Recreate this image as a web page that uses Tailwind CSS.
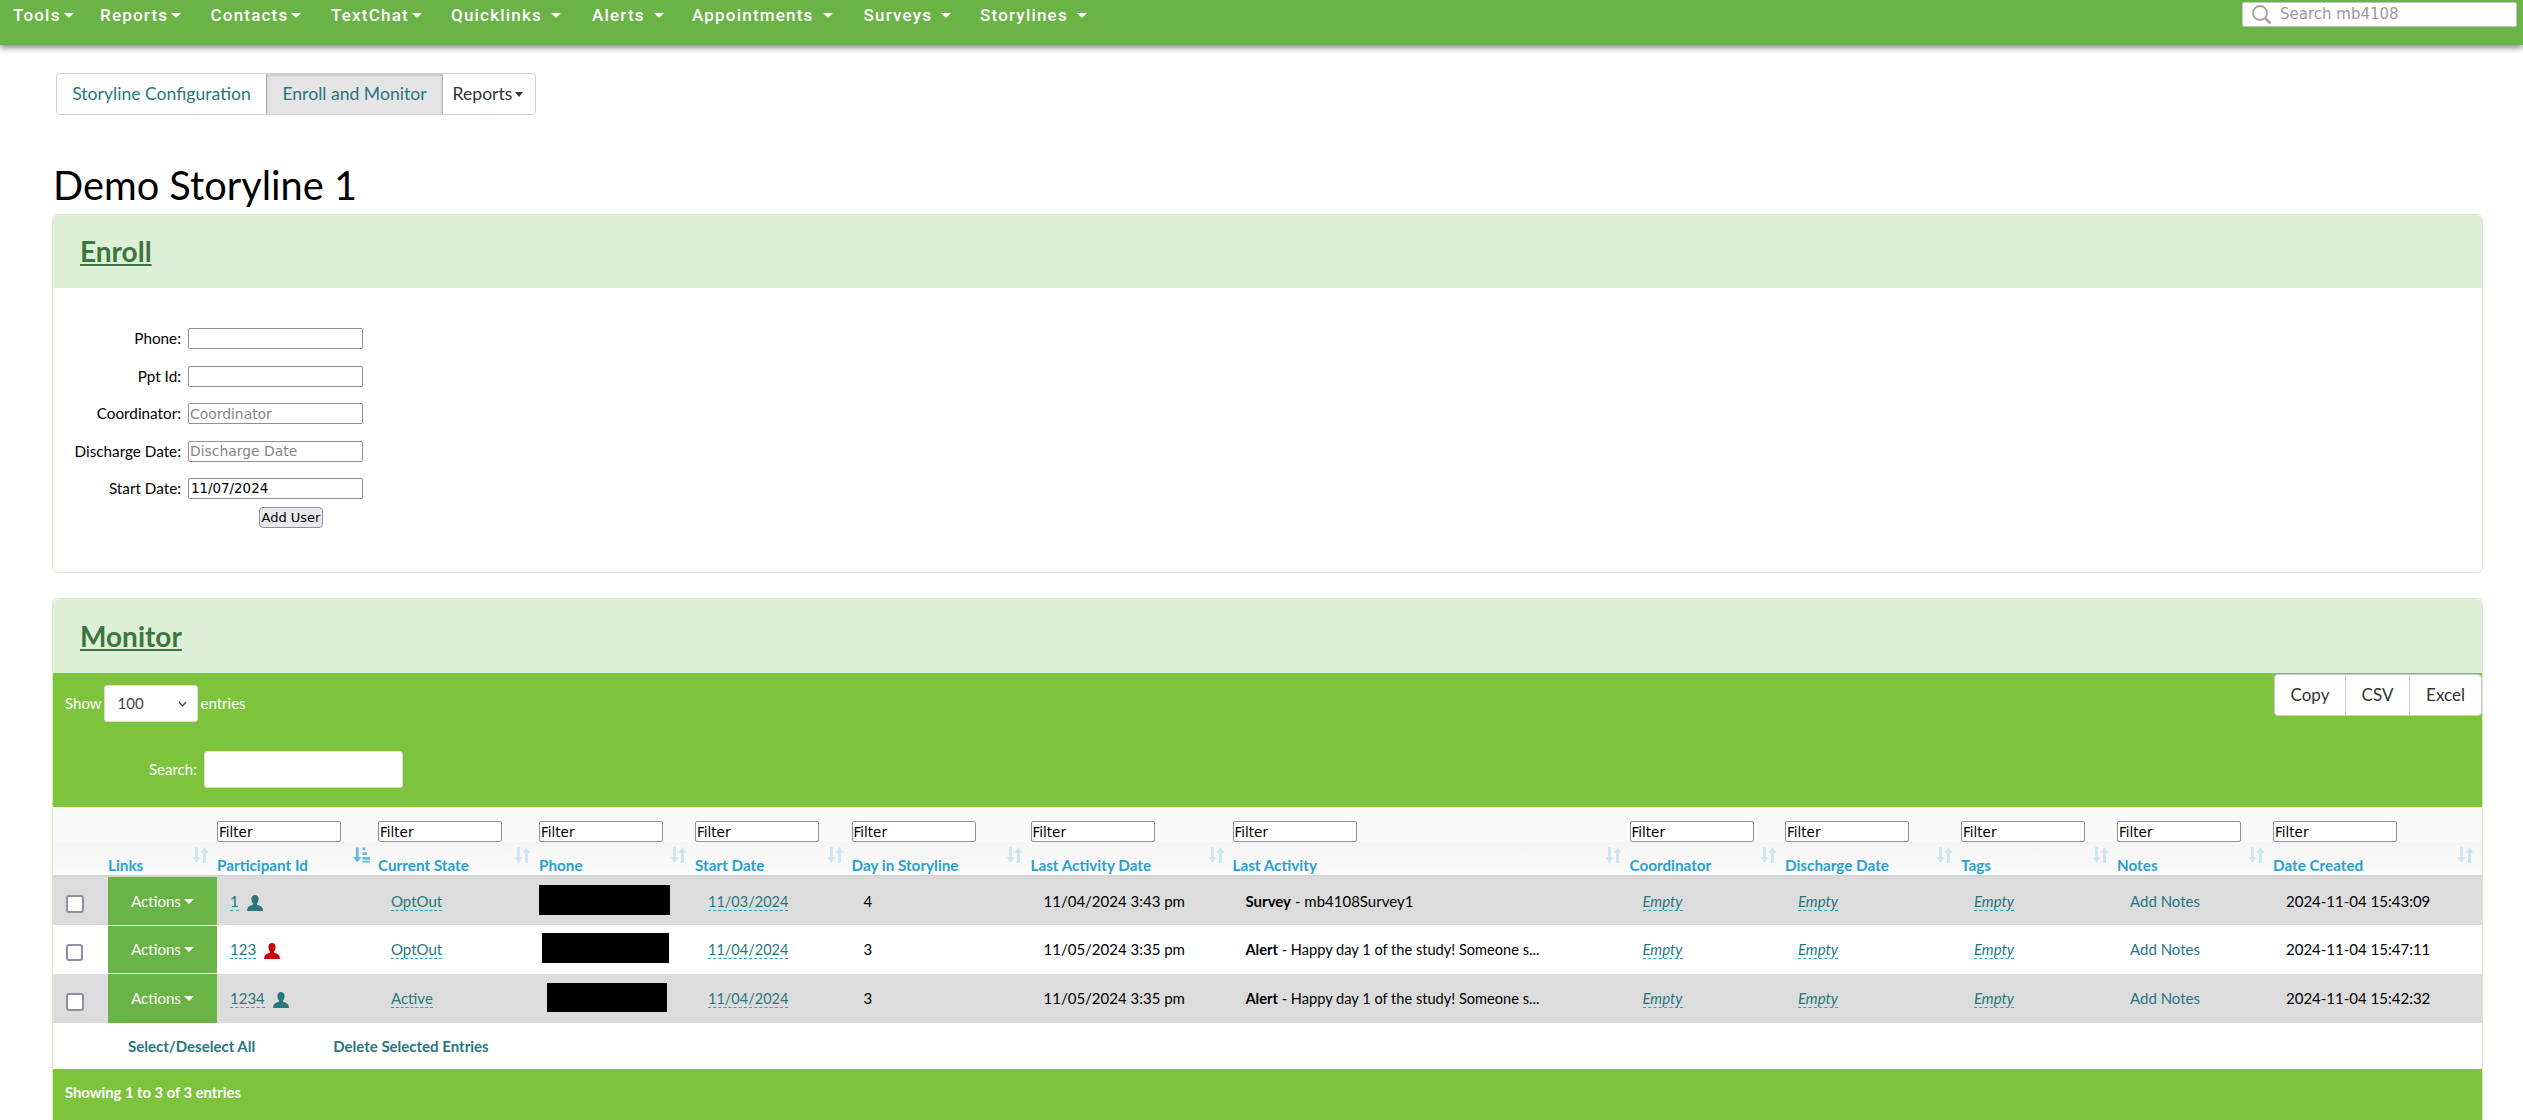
<!DOCTYPE html>
<html lang="en">

<head>
    <meta charset="UTF-8">
    <meta name="viewport" content="width=device-width, initial-scale=1.0">
    <script src="https://cdn.jsdelivr.net/npm/@tailwindcss/browser@4"></script>
    <title>Enroll and Monitor</title>
</head>

<body class="h-screen overflow-hidden bg-white font-['Lato',sans-serif] text-[15px] text-black">
    <svg class="hidden">
        <symbol id="sort" viewBox="0 0 17 16">
            <path d="M3 0h3v10h2.500L4.500 16 .5 10H3zM11 16h3V6h2.500L12.500 0l-4 6H11z" />
        </symbol>
        <symbol id="sort-alt" viewBox="0 0 18 16">
            <path d="M3 0h3v10h3l-4.500 6L0 10h3zM10 0h3v3h-3zM10 5h5v3h-5zM10 10h8v3h-8zM10 14h8v2h-8z" />
        </symbol>
        <symbol id="user" viewBox="0 0 16 16">
            <path d="M8 0c2.300 0 3.600 1.700 3.600 4 0 1.800-.7 3.500-1.600 4.500v1.300c2 .8 5 1.500 5.500 3.500l.5 2.700H0l.5-2.700c.5-2 3.500-2.700 5.500-3.500V8.500C5.100 7.500 4.400 5.800 4.400 4 4.400 1.700 5.700 0 8 0z" />
        </symbol>
    </svg>

    <nav class="flex h-[45px] items-start justify-between bg-[#6ab347] shadow-[0_3px_6px_rgba(0,0,0,0.45)]">
        <ul class="flex pl-[13px] pt-[3px] font-['Roboto',sans-serif] text-[17px] font-medium leading-[24px] tracking-[1.200px] text-white">
            <li class="flex w-[87px] items-center">Tools<span class="ml-[3px] h-0 w-0 border-x-[5px] border-t-[5px] border-x-transparent border-t-white"></span></li>
            <li class="flex w-[110.500px] items-center">Reports<span class="ml-[3px] h-0 w-0 border-x-[5px] border-t-[5px] border-x-transparent border-t-white"></span></li>
            <li class="flex w-[120.500px] items-center">Contacts<span class="ml-[3px] h-0 w-0 border-x-[5px] border-t-[5px] border-x-transparent border-t-white"></span></li>
            <li class="flex w-[120px] items-center">TextChat<span class="ml-[3px] h-0 w-0 border-x-[5px] border-t-[5px] border-x-transparent border-t-white"></span></li>
            <li class="flex w-[141px] items-center">Quicklinks<span class="ml-[9px] h-0 w-0 border-x-[5px] border-t-[5px] border-x-transparent border-t-white"></span></li>
            <li class="flex w-[100px] items-center">Alerts<span class="ml-[9px] h-0 w-0 border-x-[5px] border-t-[5px] border-x-transparent border-t-white"></span></li>
            <li class="flex w-[171.500px] items-center">Appointments<span class="ml-[9px] h-0 w-0 border-x-[5px] border-t-[5px] border-x-transparent border-t-white"></span></li>
            <li class="flex w-[116.500px] items-center">Surveys<span class="ml-[9px] h-0 w-0 border-x-[5px] border-t-[5px] border-x-transparent border-t-white"></span></li>
            <li class="flex items-center">Storylines<span class="ml-[9px] h-0 w-0 border-x-[5px] border-t-[5px] border-x-transparent border-t-white"></span></li>
        </ul>
        <div class="mr-[6px] mt-[2px] flex h-[25px] w-[275px] items-center rounded-[2px] border border-[#c4c4c4] bg-white pl-[8px]">
            <svg class="h-[21px] w-[21px] text-[#a3a3a3]" viewBox="0 0 21 21" fill="none" stroke="currentColor">
                <circle cx="9" cy="9" r="7" stroke-width="1.800" />
                <path d="M14 14l5.500 5.500" stroke-width="2.600" />
            </svg>
            <span class="ml-[8px] font-['DejaVu_Sans',sans-serif] text-[15px] text-[#9a9a9a]">Search mb4108</span>
        </div>
    </nav>

    <div class="ml-[56px] mt-[28px] flex h-[42px] w-[480px] rounded-[4px] border border-[#cfcfcf] text-[17.600px]">
        <a class="flex w-[209px] items-center justify-center text-[#28777f]">Storyline Configuration</a>
        <a class="flex w-[177px] items-center justify-center border-x border-[#b0b0b0] bg-[#e5e5e5] text-[#28777f] shadow-[inset_0_2px_3px_rgba(0,0,0,0.12)]">Enroll and Monitor</a>
        <a class="flex flex-1 items-center justify-center pr-[2px] text-[#333]">Reports<span class="ml-[3px] h-0 w-0 border-x-[4px] border-t-[5px] border-x-transparent border-t-[#333]"></span></a>
    </div>

    <h1 class="ml-[53px] mt-[43px] h-[56px] text-[39.750px] leading-[54px]">Demo Storyline 1</h1>

    <section class="ml-[52px] w-[2431px] overflow-hidden rounded-[6px] border border-[#d6e9c6]">
        <h2 class="flex h-[73px] items-center bg-[#dff0d8] pb-[2px] pl-[27px] text-[28px] font-bold text-[#3c763d] underline">Enroll</h2>
        <form class="h-[284px] pt-[40px] text-[15.250px]">
            <div class="flex h-[21px] items-center">
                <label class="w-[128px] text-right">Phone:</label>
                <input class="ml-[7px] h-[21px] w-[175px] rounded-[2px] border border-[#8f8f9d] bg-white px-[2px]" type="text">
            </div>
            <div class="mt-[16.500px] flex h-[21px] items-center">
                <label class="w-[128px] text-right">Ppt Id:</label>
                <input class="ml-[7px] h-[21px] w-[175px] rounded-[2px] border border-[#8f8f9d] bg-white px-[2px]" type="text">
            </div>
            <div class="mt-[16.500px] flex h-[21px] items-center">
                <label class="w-[128px] text-right">Coordinator:</label>
                <input class="ml-[7px] h-[21px] w-[175px] rounded-[2px] border border-[#8f8f9d] bg-white px-[1px] font-['DejaVu_Sans',sans-serif] text-[13.900px] placeholder:text-[#858585]" type="text" placeholder="Coordinator">
            </div>
            <div class="mt-[16.500px] flex h-[21px] items-center">
                <label class="w-[128px] text-right">Discharge Date:</label>
                <input class="ml-[7px] h-[21px] w-[175px] rounded-[2px] border border-[#8f8f9d] bg-white px-[1px] font-['DejaVu_Sans',sans-serif] text-[13.900px] placeholder:text-[#858585]" type="text" placeholder="Discharge Date">
            </div>
            <div class="mt-[16.500px] flex h-[21px] items-center">
                <label class="w-[128px] text-right">Start Date:</label>
                <input class="ml-[7px] h-[21px] w-[175px] rounded-[2px] border border-[#8f8f9d] bg-white px-[2px] font-['DejaVu_Sans',sans-serif] text-[13.400px]" type="text" value="11/07/2024">
            </div>
            <button class="ml-[206px] mt-[8px] flex h-[21px] w-[64px] items-center justify-center rounded-[4px] border border-[#8f8f9d] bg-[#e9e9ed] font-['DejaVu_Sans',sans-serif] text-[13px]" type="button">Add User</button>
        </form>
    </section>

    <section class="ml-[52px] mt-[25px] h-[560px] w-[2431px] rounded-t-[6px] border-x border-t border-[#d6e9c6]">
        <h2 class="flex h-[74px] items-center rounded-t-[6px] bg-[#dff0d8] pl-[27px] text-[28px] font-bold text-[#3c763d] underline">Monitor</h2>

        <div class="relative h-[134px] bg-[#7dc43c] text-[15px] text-white">
            <div class="flex items-center pl-[12px] pt-[12px]">
                Show
                <div class="ml-[2px] mr-[3px] flex h-[37px] w-[94px] items-center justify-between rounded-[3px] border border-[#ddd] bg-white pl-[13px] pr-[10px] text-[#444]">
                    100
                    <svg class="h-[6px] w-[9px]" viewBox="0 0 9 6" fill="none" stroke="#444" stroke-width="1.200"><path d="M1 1l3.500 4L8 1" /></svg>
                </div>
                entries
            </div>
            <div class="mt-[29px] flex items-center pl-[96px]">
                Search:
                <input class="ml-[7px] h-[37px] w-[199px] rounded-[3px] border border-[#ddd] bg-white" type="text">
            </div>
            <div class="absolute right-[0px] top-[1px] flex h-[42px] w-[208px] rounded-[4px] border border-[#ccc] bg-white text-[17px] text-[#333]">
                <span class="flex w-[71px] items-center justify-center border-r border-[#ccc]">Copy</span>
                <span class="flex w-[64px] items-center justify-center border-r border-[#ccc]">CSV</span>
                <span class="flex flex-1 items-center justify-center">Excel</span>
            </div>
        </div>

        <table class="w-[2429px] table-fixed border-separate border-spacing-0">
            <colgroup>
                <col class="w-[55px]">
                <col class="w-[109px]">
                <col class="w-[161px]">
                <col class="w-[161px]">
                <col class="w-[156px]">
                <col class="w-[156.500px]">
                <col class="w-[179px]">
                <col class="w-[202px]">
                <col class="w-[397px]">
                <col class="w-[155.500px]">
                <col class="w-[176px]">
                <col class="w-[156px]">
                <col class="w-[156px]">
                <col>
            </colgroup>
            <thead>
                <tr class="h-[35px] bg-[#f9f9f9]">
                    <th></th>
                    <th></th>
                    <th class="pt-[14px] text-left font-normal"><input class="block h-[21px] w-[124px] rounded-[2px] border border-[#8f8f9d] bg-white px-[1px] font-['DejaVu_Sans',sans-serif] text-[13.500px] placeholder:text-black" placeholder="Filter"></th>
                    <th class="pt-[14px] text-left font-normal"><input class="block h-[21px] w-[124px] rounded-[2px] border border-[#8f8f9d] bg-white px-[1px] font-['DejaVu_Sans',sans-serif] text-[13.500px] placeholder:text-black" placeholder="Filter"></th>
                    <th class="pt-[14px] text-left font-normal"><input class="block h-[21px] w-[124px] rounded-[2px] border border-[#8f8f9d] bg-white px-[1px] font-['DejaVu_Sans',sans-serif] text-[13.500px] placeholder:text-black" placeholder="Filter"></th>
                    <th class="pt-[14px] text-left font-normal"><input class="block h-[21px] w-[124px] rounded-[2px] border border-[#8f8f9d] bg-white px-[1px] font-['DejaVu_Sans',sans-serif] text-[13.500px] placeholder:text-black" placeholder="Filter"></th>
                    <th class="pt-[14px] text-left font-normal"><input class="block h-[21px] w-[124px] rounded-[2px] border border-[#8f8f9d] bg-white px-[1px] font-['DejaVu_Sans',sans-serif] text-[13.500px] placeholder:text-black" placeholder="Filter"></th>
                    <th class="pt-[14px] text-left font-normal"><input class="block h-[21px] w-[124px] rounded-[2px] border border-[#8f8f9d] bg-white px-[1px] font-['DejaVu_Sans',sans-serif] text-[13.500px] placeholder:text-black" placeholder="Filter"></th>
                    <th class="pt-[14px] text-left font-normal"><input class="block h-[21px] w-[124px] rounded-[2px] border border-[#8f8f9d] bg-white px-[1px] font-['DejaVu_Sans',sans-serif] text-[13.500px] placeholder:text-black" placeholder="Filter"></th>
                    <th class="pt-[14px] text-left font-normal"><input class="block h-[21px] w-[124px] rounded-[2px] border border-[#8f8f9d] bg-white px-[1px] font-['DejaVu_Sans',sans-serif] text-[13.500px] placeholder:text-black" placeholder="Filter"></th>
                    <th class="pt-[14px] text-left font-normal"><input class="block h-[21px] w-[124px] rounded-[2px] border border-[#8f8f9d] bg-white px-[1px] font-['DejaVu_Sans',sans-serif] text-[13.500px] placeholder:text-black" placeholder="Filter"></th>
                    <th class="pt-[14px] text-left font-normal"><input class="block h-[21px] w-[124px] rounded-[2px] border border-[#8f8f9d] bg-white px-[1px] font-['DejaVu_Sans',sans-serif] text-[13.500px] placeholder:text-black" placeholder="Filter"></th>
                    <th class="pt-[14px] text-left font-normal"><input class="block h-[21px] w-[124px] rounded-[2px] border border-[#8f8f9d] bg-white px-[1px] font-['DejaVu_Sans',sans-serif] text-[13.500px] placeholder:text-black" placeholder="Filter"></th>
                    <th class="pt-[14px] text-left font-normal"><input class="block h-[21px] w-[124px] rounded-[2px] border border-[#8f8f9d] bg-white px-[1px] font-['DejaVu_Sans',sans-serif] text-[13.500px] placeholder:text-black" placeholder="Filter"></th>
                </tr>
                <tr class="h-[35px] bg-linear-to-b from-[#f5f5f5] to-[#fbfbfb] text-left text-[15.250px] leading-[19px] text-[#2a9fd0]">
                    <th class="border-b-2 border-[#d5d5d5]"></th>
                    <th class="relative border-b-2 border-[#d5d5d5] pt-[14px] font-bold">Links<svg class="absolute right-[8px] top-[5px] h-[16px] w-[17px] text-[#cde6f2]" fill="currentColor"><use href="#sort" /></svg></th>
                    <th class="relative border-b-2 border-[#d5d5d5] pt-[14px] font-bold">Participant Id<svg class="absolute right-[8px] top-[5px] h-[16px] w-[17px] text-[#6db9df]" fill="currentColor"><use href="#sort-alt" /></svg></th>
                    <th class="relative border-b-2 border-[#d5d5d5] pt-[14px] font-bold">Current State<svg class="absolute right-[8px] top-[5px] h-[16px] w-[17px] text-[#cde6f2]" fill="currentColor"><use href="#sort" /></svg></th>
                    <th class="relative border-b-2 border-[#d5d5d5] pt-[14px] font-bold">Phone<svg class="absolute right-[8px] top-[5px] h-[16px] w-[17px] text-[#cde6f2]" fill="currentColor"><use href="#sort" /></svg></th>
                    <th class="relative border-b-2 border-[#d5d5d5] pt-[14px] font-bold">Start Date<svg class="absolute right-[8px] top-[5px] h-[16px] w-[17px] text-[#cde6f2]" fill="currentColor"><use href="#sort" /></svg></th>
                    <th class="relative border-b-2 border-[#d5d5d5] pt-[14px] font-bold">Day in Storyline<svg class="absolute right-[8px] top-[5px] h-[16px] w-[17px] text-[#cde6f2]" fill="currentColor"><use href="#sort" /></svg></th>
                    <th class="relative border-b-2 border-[#d5d5d5] pt-[14px] font-bold">Last Activity Date<svg class="absolute right-[8px] top-[5px] h-[16px] w-[17px] text-[#cde6f2]" fill="currentColor"><use href="#sort" /></svg></th>
                    <th class="relative border-b-2 border-[#d5d5d5] pt-[14px] font-bold">Last Activity<svg class="absolute right-[8px] top-[5px] h-[16px] w-[17px] text-[#cde6f2]" fill="currentColor"><use href="#sort" /></svg></th>
                    <th class="relative border-b-2 border-[#d5d5d5] pt-[14px] font-bold">Coordinator<svg class="absolute right-[8px] top-[5px] h-[16px] w-[17px] text-[#cde6f2]" fill="currentColor"><use href="#sort" /></svg></th>
                    <th class="relative border-b-2 border-[#d5d5d5] pt-[14px] font-bold">Discharge Date<svg class="absolute right-[8px] top-[5px] h-[16px] w-[17px] text-[#cde6f2]" fill="currentColor"><use href="#sort" /></svg></th>
                    <th class="relative border-b-2 border-[#d5d5d5] pt-[14px] font-bold">Tags<svg class="absolute right-[8px] top-[5px] h-[16px] w-[17px] text-[#cde6f2]" fill="currentColor"><use href="#sort" /></svg></th>
                    <th class="relative border-b-2 border-[#d5d5d5] pt-[14px] font-bold">Notes<svg class="absolute right-[8px] top-[5px] h-[16px] w-[17px] text-[#cde6f2]" fill="currentColor"><use href="#sort" /></svg></th>
                    <th class="relative border-b-2 border-[#d5d5d5] pt-[14px] font-bold">Date Created<svg class="absolute right-[8px] top-[5px] h-[16px] w-[17px] text-[#cde6f2]" fill="currentColor"><use href="#sort" /></svg></th>
                </tr>
            </thead>
            <tbody class="text-[15px]">
                <tr class="h-[48px] bg-[#dcdcdc]">
                    <td class="pl-[13px]"><span class="block h-[18px] w-[18px] translate-y-[3px] rounded-[3px] border-2 border-[#8f8f9d] bg-white"></span></td>
                    <td class="bg-[#6ab347] text-white"><span class="flex items-center justify-center">Actions<span class="ml-[3px] h-0 w-0 border-x-[5px] border-t-[5px] border-x-transparent border-t-white"></span></span></td>
                    <td class="pl-[13px]"><a class="border-b border-dashed border-[#2a9fd0] text-[#28777f]">1</a><svg class="ml-[8px] inline h-[16px] w-[16px] text-[#28777f]" fill="currentColor"><use href="#user" /></svg></td>
                    <td class="pl-[13px]"><a class="border-b border-dashed border-[#2a9fd0] text-[#28777f]">OptOut</a></td>
                    <td><div class="h-[30px] w-[131px] -translate-y-[1px] bg-black"></div></td>
                    <td class="pl-[13px]"><a class="border-b border-dashed border-[#2a9fd0] text-[14.500px] text-[#28777f]">11/03/2024</a></td>
                    <td class="pl-[12px]">4</td>
                    <td class="pl-[13px]">11/04/2024 3:43 pm</td>
                    <td class="pl-[13px]"><b>Survey</b> - mb4108Survey1</td>
                    <td class="pl-[13px]"><a class="border-b border-dashed border-[#2a9fd0] italic text-[#28777f]">Empty</a></td>
                    <td class="pl-[13px]"><a class="border-b border-dashed border-[#2a9fd0] italic text-[#28777f]">Empty</a></td>
                    <td class="pl-[13px]"><a class="border-b border-dashed border-[#2a9fd0] italic text-[#28777f]">Empty</a></td>
                    <td class="pl-[13px] text-[#28777f]">Add Notes</td>
                    <td class="pl-[13px]">2024-11-04 15:43:09</td>
                </tr>
                <tr class="h-[49px] bg-white">
                    <td class="pl-[13px]"><span class="block h-[17px] w-[17px] translate-y-[3px] rounded-[3px] border-2 border-[#8f8f9d] bg-white"></span></td>
                    <td class="border-y border-white bg-[#6ab347] text-white"><span class="flex items-center justify-center">Actions<span class="ml-[3px] h-0 w-0 border-x-[5px] border-t-[5px] border-x-transparent border-t-white"></span></span></td>
                    <td class="pl-[13px]"><a class="border-b border-dashed border-[#2a9fd0] text-[#28777f]">123</a><svg class="ml-[8px] inline h-[16px] w-[16px] text-[#cc0000]" fill="currentColor"><use href="#user" /></svg></td>
                    <td class="pl-[13px]"><a class="border-b border-dashed border-[#2a9fd0] text-[#28777f]">OptOut</a></td>
                    <td><div class="ml-[3px] h-[30px] w-[127px] -translate-y-[2px] bg-black"></div></td>
                    <td class="pl-[13px]"><a class="border-b border-dashed border-[#2a9fd0] text-[14.500px] text-[#28777f]">11/04/2024</a></td>
                    <td class="pl-[12px]">3</td>
                    <td class="pl-[13px]">11/05/2024 3:35 pm</td>
                    <td class="pl-[13px] text-[14.600px]"><b>Alert</b> - Happy day 1 of the study! Someone s...</td>
                    <td class="pl-[13px]"><a class="border-b border-dashed border-[#2a9fd0] italic text-[#28777f]">Empty</a></td>
                    <td class="pl-[13px]"><a class="border-b border-dashed border-[#2a9fd0] italic text-[#28777f]">Empty</a></td>
                    <td class="pl-[13px]"><a class="border-b border-dashed border-[#2a9fd0] italic text-[#28777f]">Empty</a></td>
                    <td class="pl-[13px] text-[#28777f]">Add Notes</td>
                    <td class="pl-[13px]">2024-11-04 15:47:11</td>
                </tr>
                <tr class="h-[49px] bg-[#dcdcdc]">
                    <td class="pl-[13px]"><span class="block h-[18px] w-[18px] translate-y-[3px] rounded-[3px] border-2 border-[#8f8f9d] bg-white"></span></td>
                    <td class="bg-[#6ab347] text-white"><span class="flex items-center justify-center">Actions<span class="ml-[3px] h-0 w-0 border-x-[5px] border-t-[5px] border-x-transparent border-t-white"></span></span></td>
                    <td class="pl-[13px]"><a class="border-b border-dashed border-[#2a9fd0] text-[#28777f]">1234</a><svg class="ml-[8px] inline h-[16px] w-[16px] text-[#28777f]" fill="currentColor"><use href="#user" /></svg></td>
                    <td class="pl-[13px]"><a class="border-b border-dashed border-[#2a9fd0] text-[#28777f]">Active</a></td>
                    <td><div class="ml-[8px] h-[29px] w-[120px] -translate-y-[1px] bg-black"></div></td>
                    <td class="pl-[13px]"><a class="border-b border-dashed border-[#2a9fd0] text-[14.500px] text-[#28777f]">11/04/2024</a></td>
                    <td class="pl-[12px]">3</td>
                    <td class="pl-[13px]">11/05/2024 3:35 pm</td>
                    <td class="pl-[13px] text-[14.600px]"><b>Alert</b> - Happy day 1 of the study! Someone s...</td>
                    <td class="pl-[13px]"><a class="border-b border-dashed border-[#2a9fd0] italic text-[#28777f]">Empty</a></td>
                    <td class="pl-[13px]"><a class="border-b border-dashed border-[#2a9fd0] italic text-[#28777f]">Empty</a></td>
                    <td class="pl-[13px]"><a class="border-b border-dashed border-[#2a9fd0] italic text-[#28777f]">Empty</a></td>
                    <td class="pl-[13px] text-[#28777f]">Add Notes</td>
                    <td class="pl-[13px]">2024-11-04 15:42:32</td>
                </tr>
            </tbody>
        </table>

        <div class="flex h-[46px] items-center pl-[75px] text-[15px] font-bold text-[#28777f]">
            <a>Select/Deselect All</a>
            <a class="ml-[78px]">Delete Selected Entries</a>
        </div>
        <div class="h-[60px] bg-[#7dc43c] pl-[12px] pt-[12px] text-[14.750px] font-bold text-white">Showing 1 to 3 of 3 entries</div>
    </section>
</body>

</html>
